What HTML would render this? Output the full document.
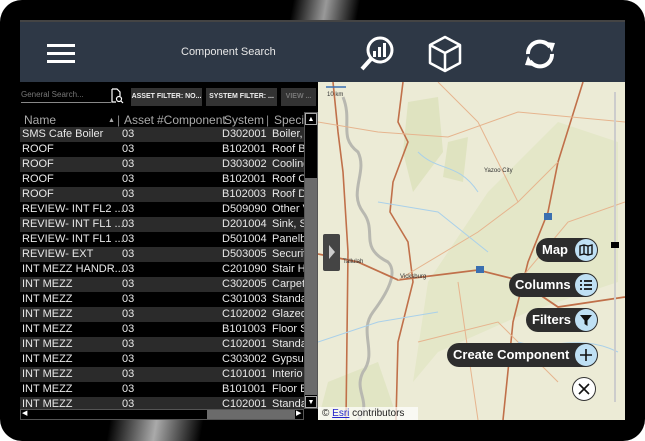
<!DOCTYPE html>
<html><head><style>
*{margin:0;padding:0;box-sizing:border-box}
body{width:645px;height:441px;background:#fff;overflow:hidden;position:relative;font-family:"Liberation Sans",sans-serif}
.frame{position:absolute;left:0;top:0;width:645px;height:441px;background:#000;border-radius:22px}
.glare1{position:absolute;left:285px;top:0;width:80px;height:20px;background:linear-gradient(100deg,#000 10%,#999 50%,#000 90%)}
.glare2{position:absolute;left:90px;top:420px;width:130px;height:21px;background:linear-gradient(100deg,#000 15%,#aaa 50%,#000 85%)}
.hdr{position:absolute;left:20px;top:20px;width:605px;height:62px;background:#2e3846;border-top:2px solid #444}
.title{position:absolute;left:181px;top:46px;color:#e8e8e8;font-size:11px}
.left{position:absolute;left:20px;top:82px;width:298px;height:338px;background:#000}
.search{position:absolute;left:21px;top:90px;color:#777;font-size:8px;width:90px;border-bottom:1px solid #888;height:13px}
.btn{position:absolute;top:88px;height:18px;background:#333;color:#eee;font-size:7px;font-weight:bold;line-height:18px;text-align:center}
.row{position:absolute;left:20px;width:284px;height:15px;font-size:11px;color:#e8e8e8;line-height:15px;white-space:nowrap;overflow:hidden}
.row span{position:absolute}
.map{position:absolute;left:318px;top:82px;width:307px;height:338px;background:#ecebd6;overflow:hidden}
.pill{position:absolute;height:24px;background:#2d2d2d;border-radius:12px;color:#fff;font-weight:bold;font-size:13px;line-height:24px;padding-left:6px}
.ic{position:absolute;right:1px;top:1px;width:22px;height:22px;border-radius:50%;background:#bfe0f4;display:flex;align-items:center;justify-content:center}
</style></head><body>
<div class="frame"></div>
<div class="glare1"></div><div class="glare2"></div>
<div class="hdr">
 <div style="position:absolute;left:27px;top:22px;width:28px;height:3px;background:#fff;box-shadow:0 8px 0 #fff,0 16px 0 #fff"></div>
 <svg style="position:absolute;left:338px;top:12px" width="40" height="40" viewBox="0 0 40 40"><circle cx="22" cy="16" r="12" fill="none" stroke="#fff" stroke-width="3"/><rect x="15" y="17" width="3" height="6" fill="#fff"/><rect x="20" y="13" width="3" height="10" fill="#fff"/><rect x="25" y="9" width="3" height="14" fill="#fff"/><line x1="13" y1="25" x2="4" y2="35" stroke="#fff" stroke-width="4"/></svg>
 <svg style="position:absolute;left:405px;top:12px" width="40" height="40" viewBox="0 0 40 40"><path d="M20 3 L35 11 L35 29 L20 37 L5 29 L5 11 Z M5 11 L20 19 L35 11 M20 19 L20 37" fill="none" stroke="#fff" stroke-width="2.5" stroke-linejoin="round"/></svg>
 <svg style="position:absolute;left:500px;top:12px" width="40" height="40" viewBox="0 0 40 40"><path d="M8 20 A12 12 0 0 1 30 13" fill="none" stroke="#fff" stroke-width="4"/><path d="M26 8 L35 9 L32 18 Z" fill="#fff"/><path d="M32 20 A12 12 0 0 1 10 27" fill="none" stroke="#fff" stroke-width="4"/><path d="M14 32 L5 31 L8 22 Z" fill="#fff"/></svg>
</div>
<div class="title">Component Search</div>
<div class="left"></div>
<div class="search">General Search...</div>
<svg style="position:absolute;left:110px;top:88px" width="14" height="16" viewBox="0 0 14 16"><path d="M2 1 H7 L10 4 V8 M2 1 V14 H6" fill="none" stroke="#fff" stroke-width="1.2"/><circle cx="9" cy="11" r="2.5" fill="none" stroke="#fff" stroke-width="1.2"/><line x1="11" y1="13" x2="13" y2="15" stroke="#fff" stroke-width="1.2"/></svg>
<div class="btn" style="left:131px;width:71px">ASSET FILTER: NO...</div>
<div class="btn" style="left:206px;width:71px">SYSTEM FILTER: ...</div>
<div class="btn" style="left:281px;width:35px;color:#777">VIEW ...</div>
<div class="row" style="top:113px;color:#aaa;font-size:12px"><span style="left:4px">Name</span><span style="left:88px;font-size:7px">▲</span><span style="left:97px;color:#888">|</span><span style="left:104px">Asset</span><span style="left:137px">#Component</span><span style="left:204px">System</span><span style="left:246px;color:#888">|</span><span style="left:254px">Specif</span></div>
<div id="rows"></div>
<div style="position:absolute;left:304px;top:112px;width:14px;height:297px;background:#000;border:1px solid #555"></div>
<div style="position:absolute;left:305px;top:178px;width:12px;height:217px;background:#6b6b6b"></div>
<div style="position:absolute;left:305px;top:113px;width:12px;height:12px;color:#fff;font-size:7px;text-align:center;line-height:12px;border:1px solid #aaa">▲</div>
<div style="position:absolute;left:305px;top:396px;width:12px;height:12px;color:#fff;font-size:7px;text-align:center;line-height:12px;border:1px solid #aaa">▼</div>
<div style="position:absolute;left:20px;top:409px;width:284px;height:11px;background:#000;border:1px solid #555"></div>
<div style="position:absolute;left:207px;top:410px;width:88px;height:9px;background:#6b6b6b"></div>
<div style="position:absolute;left:22px;top:409px;color:#fff;font-size:7px">◀</div>
<div style="position:absolute;left:296px;top:409px;color:#fff;font-size:7px">▶</div>
<div class="map">
<svg width="307" height="338" viewBox="0 0 307 338">
 <path d="M90 20 L120 15 L125 70 L95 110 L85 70Z" fill="#dfe3c0"/>
 <path d="M130 60 L150 55 L145 100 L125 95Z" fill="#dfe3c0"/>
 <path d="M170 110 L240 40 L300 60 L300 200 L210 230 L120 270 L95 300 L110 200Z" fill="#e4e7c8"/>
 <path d="M10 300 L60 280 L80 338 L0 338Z" fill="#e1e5c4"/>
 <path d="M25 15 C35 40 20 55 40 70 C50 90 30 110 45 130 C60 150 40 165 70 180 C80 190 70 210 55 230 C40 250 60 270 45 290 C35 310 55 320 40 338" fill="none" stroke="#b8b8b0" stroke-width="3"/>
 <path d="M15 0 L20 50 L25 90 L30 170 L28 338" fill="none" stroke="#c0704a" stroke-width="1.6"/>
 <path d="M85 0 L80 40 L90 60 L75 100 L72 130 L90 160 L95 200 L80 260 L78 338" fill="none" stroke="#c0704a" stroke-width="1.6"/>
 <path d="M0 172 L40 180 L80 198 L160 188 L200 198 L240 225 L307 215" fill="none" stroke="#c0704a" stroke-width="1.8"/>
 <path d="M265 0 L240 80 L230 130 L210 180 L195 240 L185 338" fill="none" stroke="#c0704a" stroke-width="1.6"/>
 <path d="M80 198 L160 150 L200 120 L240 80 M120 0 L160 40 L180 80 L200 120 M0 40 L60 50 L130 55 L200 30 L307 40 M200 200 L250 140 L307 120 M100 260 L180 240 L240 300 M140 200 L160 338" fill="none" stroke="#e6b48e" stroke-width="1"/>
 <path d="M60 120 L120 130 L170 170 M100 70 C120 90 140 80 160 110 M0 260 L60 240 L120 230 M200 260 C230 270 260 250 300 270" fill="none" stroke="#a9d0ea" stroke-width="1"/>
 <line x1="8" y1="5" x2="28" y2="5" stroke="#3a6fb0" stroke-width="1.5"/>
 <text x="9" y="14" font-size="6" fill="#333">10 km</text>
 <text x="166" y="90" font-size="6" fill="#333">Yazoo City</text>
 <text x="25" y="181" font-size="6" fill="#333">Tallulah</text>
 <text x="82" y="196" font-size="6" fill="#333">Vicksburg</text>
 <rect x="226" y="131" width="8" height="7" fill="#3a6fb0"/><rect x="158" y="184" width="8" height="7" fill="#3a6fb0"/>
 <line x1="297" y1="10" x2="297" y2="320" stroke="#ccc" stroke-width="2"/>
 <rect x="293" y="160" width="8" height="6" fill="#000"/>
 <rect x="5" y="152" width="17" height="37" rx="2" fill="#444"/>
 <path d="M11 163 L17 170 L11 177Z" fill="#ccc"/>
</svg>
<div style="position:absolute;left:0;bottom:0;width:100px;height:13px;background:rgba(255,255,255,.7);font-size:10px;color:#222;padding-left:4px;line-height:13px">© <span style="color:#22c;text-decoration:underline">Esri</span> contributors</div>
</div>
<div class="pill" style="left:536px;top:238px;width:62px">Map<div class="ic"><svg width="14" height="12" viewBox="0 0 14 12"><path d="M1 2 L5 1 L9 2 L13 1 V10 L9 11 L5 10 L1 11Z M5 1V10 M9 2V11" fill="none" stroke="#111" stroke-width="1.4"/></svg></div></div>
<div class="pill" style="left:509px;top:273px;width:89px">Columns<div class="ic"><svg width="14" height="12" viewBox="0 0 14 12"><path d="M1 2H3M5 2H13M1 6H3M5 6H13M1 10H3M5 10H13" stroke="#111" stroke-width="1.8"/></svg></div></div>
<div class="pill" style="left:526px;top:308px;width:72px">Filters<div class="ic"><svg width="14" height="14" viewBox="0 0 14 14"><path d="M1 2H13L8.5 7.5V13L5.5 11V7.5Z" fill="#111"/></svg></div></div>
<div class="pill" style="left:447px;top:343px;width:151px">Create Component<div class="ic"><svg width="14" height="14" viewBox="0 0 14 14"><path d="M7 1V13M1 7H13" stroke="#111" stroke-width="1.6"/></svg></div></div>
<div style="position:absolute;left:572px;top:377px;width:24px;height:24px;border-radius:50%;background:#fff;border:1px solid #333;display:flex;align-items:center;justify-content:center"><svg width="12" height="12" viewBox="0 0 12 12"><path d="M1 1L11 11M11 1L1 11" stroke="#111" stroke-width="1.6"/></svg></div>
<script>
var d=[["SMS Cafe Boiler","D302001","Boiler,"],["ROOF","B102001","Roof B"],["ROOF","D303002","Cooling"],["ROOF","B102001","Roof C"],["ROOF","B102003","Roof D"],["REVIEW- INT FL2 ...","D509090","Other V"],["REVIEW- INT FL1 ...","D201004","Sink, Se"],["REVIEW- INT FL1 ...","D501004","Panelb"],["REVIEW- EXT","D503005","Securit"],["INT MEZZ HANDR...","C201090","Stair H"],["INT MEZZ","C302005","Carpet"],["INT MEZZ","C301003","Standa"],["INT MEZZ","C102002","Glazed"],["INT MEZZ","B101003","Floor S"],["INT MEZZ","C102001","Standa"],["INT MEZZ","C303002","Gypsur"],["INT MEZZ","C101001","Interio"],["INT MEZZ","B101001","Floor B"],["INT MEZZ","C102001","Standa"]];
var h="";d.forEach(function(r,i){h+='<div class="row" style="top:'+(127+i*15)+'px;background:'+(i%2==0?'#2b2b2b':'#000')+'"><span style="left:2px">'+r[0]+'</span><span style="left:102px">03</span><span style="left:202px">'+r[1]+'</span><span style="left:252px">'+r[2]+'</span></div>'});
document.getElementById("rows").innerHTML=h;
</script>
</body></html>
